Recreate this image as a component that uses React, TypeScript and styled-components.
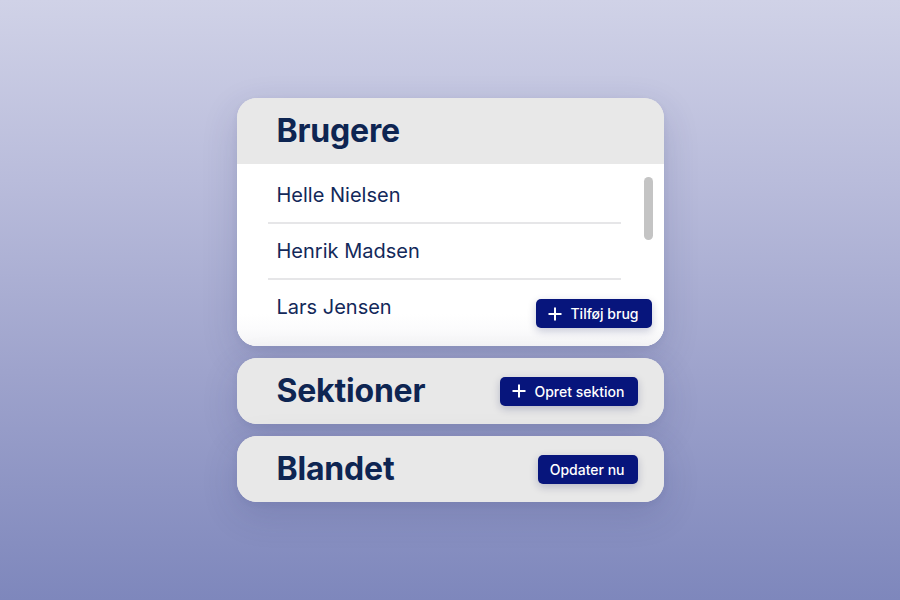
import React from "react";
import styled, { createGlobalStyle } from "styled-components";

const GlobalStyle = createGlobalStyle`
  html, body {
    margin: 0;
    padding: 0;
    height: 100%;
  }
  body {
    font-family: Inter, "Noto Sans", "Liberation Sans", sans-serif;
    background: linear-gradient(180deg, #d0d2e7 0%, #b9bcdb 30%, #9ea3cc 62%, #7e87bc 100%);
    -webkit-font-smoothing: antialiased;
  }
  #root {
    height: 100%;
  }
`;

const Page = styled.main`
  height: 600px;
  display: flex;
  align-items: center;
  justify-content: center;
`;

const Stack = styled.div`
  width: 427px;
  display: flex;
  flex-direction: column;
  gap: 12px;
`;

const Card = styled.section`
  position: relative;
  border-radius: 20px;
  background: #e8e8e8;
  overflow: hidden;
  box-shadow: 0 12px 36px rgba(40, 44, 100, 0.16), 0 2px 6px rgba(40, 44, 100, 0.06);
`;

const Header = styled.header`
  height: 66px;
  display: flex;
  align-items: center;
  justify-content: space-between;
  padding: 0 26px 0 40px;
  background: #e8e8e8;
`;

const Title = styled.h2`
  margin: 0;
  font-size: 32px;
  font-weight: 700;
  letter-spacing: -0.2px;
  color: #0e2552;
  line-height: 40px;
`;

const Body = styled.div`
  position: relative;
  height: 182px;
  background: #ffffff;
  padding: 0 11px 0 31px;
`;

const Scroller = styled.div`
  height: 100%;
  overflow-y: auto;
  scrollbar-width: none;
  &::-webkit-scrollbar {
    display: none;
  }
`;

/* custom scroll thumb drawn over the list's right edge */
const Thumb = styled.div`
  position: absolute;
  top: 13px;
  right: 11px;
  width: 9px;
  height: 63px;
  border-radius: 5px;
  background: #c4c4c4;
`;

const List = styled.ul`
  list-style: none;
  margin: 0;
  padding: 4px 32px 0 0;
`;

const Row = styled.li`
  height: 54px;
  display: flex;
  align-items: center;
  padding-left: 9px;
  font-size: 20px;
  font-weight: 400;
  color: #13295a;
  & + & {
    border-top: 2px solid #e6e6e8;
  }
`;

const Fade = styled.div`
  position: absolute;
  left: 0;
  right: 0;
  bottom: 0;
  height: 32px;
  pointer-events: none;
  background: linear-gradient(
    180deg,
    rgba(255, 255, 255, 0) 0%,
    rgba(251, 251, 252, 0.92) 45%,
    #f4f4f6 100%
  );
`;

const Button = styled.button<{ $floating?: boolean }>`
  display: inline-flex;
  align-items: center;
  gap: 8px;
  height: 29px;
  padding: 0 13px 0 12px;
  border: none;
  border-radius: 5px;
  background: #07157c;
  color: #ffffff;
  font-family: Inter, "Noto Sans", "Liberation Sans", sans-serif;
  font-size: 14px;
  font-weight: 500;
  line-height: 17px;
  cursor: pointer;
  box-shadow: 0 3px 8px rgba(10, 20, 80, 0.22);
  ${(p) =>
    p.$floating
      ? `
    position: absolute;
    right: 12px;
    bottom: 18px;
  `
      : ""}
`;

const PlusIcon = () => (
  <svg width="14" height="14" viewBox="0 0 14 14" aria-hidden="true">
    <path d="M7 0.5V13.5M0.5 7H13.5" stroke="currentColor" strokeWidth="2" fill="none" />
  </svg>
);

const users = ["Helle Nielsen", "Henrik Madsen", "Lars Jensen"];

export default function App() {
  return (
    <>
      <GlobalStyle />
      <Page>
        <Stack>
          <Card>
            <Header>
              <Title>Brugere</Title>
            </Header>
            <Body>
              <Scroller>
                <List>
                  {users.map((name) => (
                    <Row key={name}>{name}</Row>
                  ))}
                </List>
              </Scroller>
              <Thumb />
              <Fade />
              <Button $floating>
                <PlusIcon />
                Tilføj brug
              </Button>
            </Body>
          </Card>

          <Card>
            <Header>
              <Title>Sektioner</Title>
              <Button>
                <PlusIcon />
                Opret sektion
              </Button>
            </Header>
          </Card>

          <Card>
            <Header>
              <Title>Blandet</Title>
              <Button>Opdater nu</Button>
            </Header>
          </Card>
        </Stack>
      </Page>
    </>
  );
}
